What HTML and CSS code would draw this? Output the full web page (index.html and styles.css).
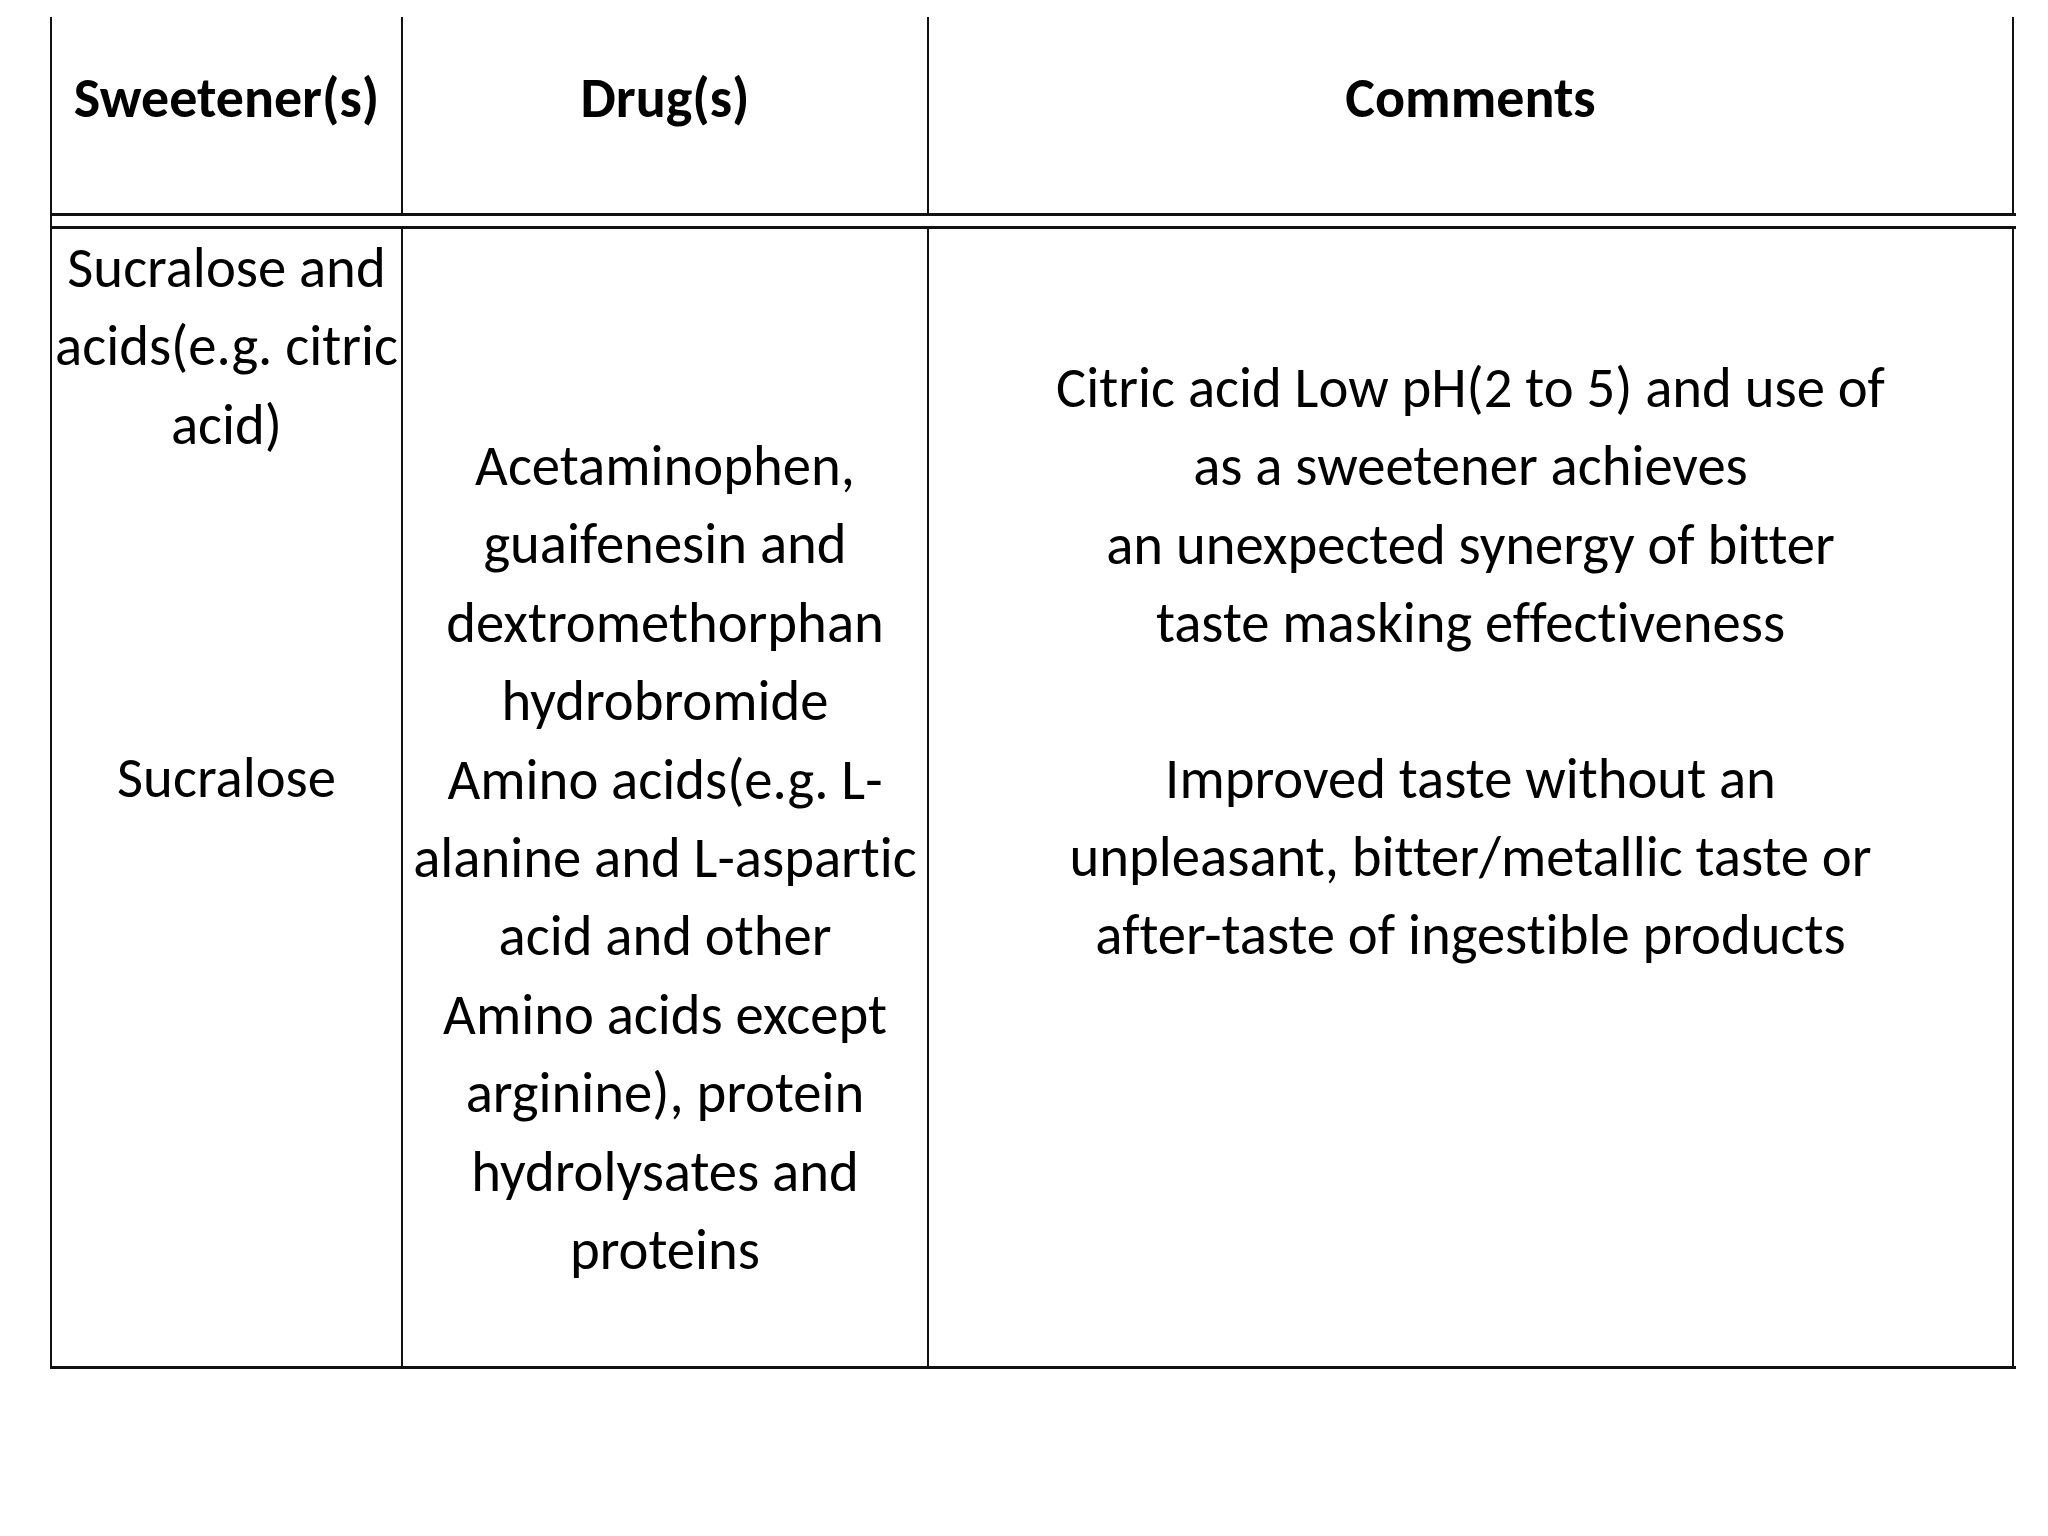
FILE: index.html
```html
<!DOCTYPE html>
<html lang="en">
<head>
<meta charset="utf-8">
<title>Sweeteners table</title>
<link rel="stylesheet" href="styles.css">
</head>
<body>
<div class="table">
  <div class="row head">
    <div class="cell c1">Sweetener(s)</div>
    <div class="cell c2">Drug(s)</div>
    <div class="cell c3">Comments</div>
  </div>
  <div class="row body">
    <div class="cell c1">
      <p class="blk b1a">Sucralose and<br>acids(e.g. citric<br>acid)</p>
      <p class="blk b1b">Sucralose</p>
    </div>
    <div class="cell c2">
      <p class="blk b2a">Acetaminophen,<br>guaifenesin and<br>dextromethorphan<br>hydrobromide<br>Amino acids(e.g. L-<br>alanine and L-aspartic<br>acid and other<br>Amino acids except<br>arginine), protein<br>hydrolysates and<br>proteins</p>
    </div>
    <div class="cell c3">
      <p class="blk b3a">Citric acid Low pH(2 to 5) and use of<br>as a sweetener achieves<br>an unexpected synergy of bitter<br>taste masking effectiveness</p>
      <p class="blk b3b">Improved taste without an<br>unpleasant, bitter/metallic taste or<br>after-taste of ingestible products</p>
    </div>
  </div>
</div>
</body>
</html>
```
FILE: styles.css
```css
html, body {
  margin: 0;
  padding: 0;
  background: #ffffff;
}
body {
  width: 2048px;
  height: 1536px;
  font-family: Carlito, "Open Sans", sans-serif;
  font-variant-ligatures: none;
  font-feature-settings: "liga" 0, "clig" 0;
  color: #000000;
}
.table {
  margin-left: 50px;
  margin-top: 17px;
  width: 1964px;
  border-left: 2px solid #111;
  display: flex;
  flex-direction: column;
  gap: 10px;
}
.row {
  display: grid;
  grid-template-columns: 349px 526px 1087px;
}
.cell {
  box-sizing: border-box;
  text-align: center;
  white-space: nowrap;
}
.c2, .c3 {
  border-left: 2px solid #111;
}
.c3 {
  border-right: 2px solid #111;
}
.head {
  height: 199px;
  border-bottom: 3px solid #111;
  box-sizing: border-box;
  font-weight: bold;
  font-size: 56px;
  line-height: 78.4px;
}
.head .cell {
  padding-top: 42px;
}
.body {
  height: 1143px;
  box-sizing: border-box;
  border-top: 3px solid #111;
  border-bottom: 3px solid #111;
  font-size: 56.7px;
  line-height: 78.4px;
}
.blk {
  margin: 0;
}
.b1a { padding-top: 0; }
.b1b { margin-top: 275px; }
.b2a { padding-top: 198px; }
.b3a { padding-top: 120px; }
.b3b { margin-top: 77px; }
```
